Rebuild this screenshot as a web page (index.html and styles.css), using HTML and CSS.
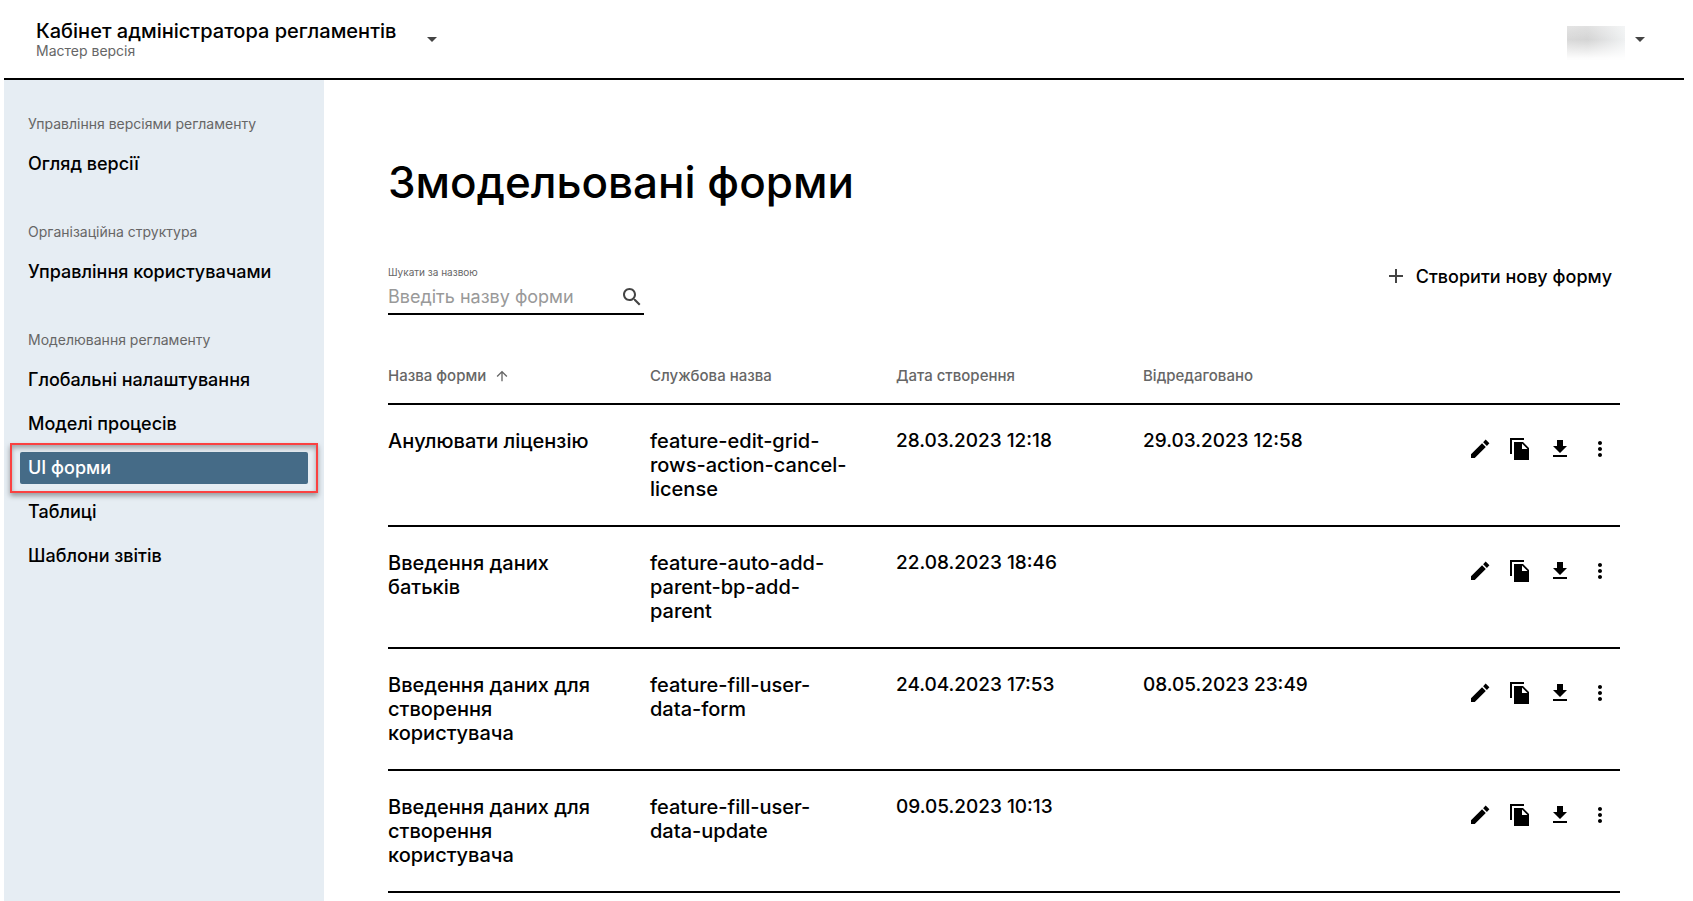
FILE: index.html
```html
<!DOCTYPE html>
<html lang="uk">
<head>
<meta charset="utf-8">
<title>Кабінет адміністратора регламентів</title>
<link rel="stylesheet" href="styles.css">
</head>
<body>
<svg class="sprite" aria-hidden="true">
  <symbol id="caret" viewBox="0 0 24 24"><path d="M7 10l5 5 5-5z"/></symbol>
  <symbol id="search" viewBox="0 0 24 24"><path d="M15.5 14h-.79l-.28-.27C15.41 12.59 16 11.11 16 9.5 16 5.91 13.09 3 9.5 3S3 5.91 3 9.5 5.91 16 9.5 16c1.61 0 3.09-.59 4.23-1.57l.27.28v.79l5 4.99L20.49 19l-4.99-5zm-6 0C7.01 14 5 11.99 5 9.5S7.01 5 9.5 5 14 7.01 14 9.5 11.99 14 9.5 14z"/></symbol>
  <symbol id="plus" viewBox="0 0 24 24"><path d="M19 13h-6v6h-2v-6H5v-2h6V5h2v6h6v2z"/></symbol>
  <symbol id="up" viewBox="0 0 24 24"><path d="M4 12l1.41 1.41L11 7.83V20h2V7.83l5.58 5.59L20 12l-8-8-8 8z"/></symbol>
  <symbol id="edit" viewBox="0 0 24 24"><path d="M3 17.25V21h3.75L17.81 9.94l-3.75-3.75L3 17.25zM21.41 6.34l-3.75-3.75-2.53 2.54 3.75 3.75 2.53-2.54z"/></symbol>
  <symbol id="copy" viewBox="0 0 24 24"><path d="M16 1H2v16h2V3h12V1zm-1 4l6 6v12H6V5h9zm-1 7h5.500L14 6.500V12z"/></symbol>
  <symbol id="download" viewBox="0 0 24 24"><path d="M19 9h-4V3H9v6H5l7 7 7-7zM5 18v2h14v-2H5z"/></symbol>
  <symbol id="more" viewBox="0 0 24 24"><path d="M12 8c1.100 0 2-.9 2-2s-.9-2-2-2-2 .9-2 2 .9 2 2 2zm0 2c-1.100 0-2 .9-2 2s.9 2 2 2 2-.9 2-2-.9-2-2-2zm0 6c-1.100 0-2 .9-2 2s.9 2 2 2 2-.9 2-2-.9-2-2-2z"/></symbol>
</svg>
<div class="app">
  <header class="header">
    <div class="brand">
      <div>
        <div class="brand-title">Кабінет адміністратора регламентів</div>
        <div class="brand-version">Мастер версія</div>
      </div>
      <button class="caret-button" type="button" aria-label="Змінити версію"><svg class="icon"><use href="#caret"/></svg></button>
    </div>
    <div class="user">
      <span class="user-name"></span>
      <button class="caret-button" type="button" aria-label="Меню користувача"><svg class="icon"><use href="#caret"/></svg></button>
    </div>
  </header>
  <div class="body">
    <nav class="sidebar">
      <section class="group">
        <h2 class="group-title">Управління версіями регламенту</h2>
        <a class="nav-link" href="#">Огляд версії</a>
      </section>
      <section class="group">
        <h2 class="group-title">Організаційна структура</h2>
        <a class="nav-link" href="#">Управління користувачами</a>
      </section>
      <section class="group">
        <h2 class="group-title">Моделювання регламенту</h2>
        <a class="nav-link" href="#">Глобальні налаштування</a>
        <a class="nav-link" href="#">Моделі процесів</a>
        <a class="nav-link active" href="#" aria-current="page">UI форми</a>
        <a class="nav-link" href="#">Таблиці</a>
        <a class="nav-link" href="#">Шаблони звітів</a>
      </section>
    </nav>
    <main class="main">
      <h1 class="title">Змодельовані форми</h1>
      <div class="toolbar">
        <div class="search">
          <label class="search-label" for="q">Шукати за назвою</label>
          <div class="search-field">
            <input class="search-input" id="q" type="text" placeholder="Введіть назву форми">
            <svg class="icon"><use href="#search"/></svg>
          </div>
        </div>
        <button class="create" type="button"><svg class="icon"><use href="#plus"/></svg>Створити нову форму</button>
      </div>
      <table class="forms">
        <colgroup><col class="col-name"><col class="col-key"><col class="col-date"><col class="col-date"><col></colgroup>
        <thead>
          <tr>
            <th scope="col"><button class="sort" type="button">Назва форми<svg class="sort-icon"><use href="#up"/></svg></button></th>
            <th scope="col">Службова назва</th>
            <th scope="col">Дата створення</th>
            <th scope="col">Відредаговано</th>
            <th></th>
          </tr>
        </thead>
        <tbody>
          <tr>
            <td>Анулювати ліцензію</td>
            <td>feature-edit-grid-rows-action-cancel-license</td>
            <td class="date">28.03.2023 12:18</td>
            <td class="date">29.03.2023 12:58</td>
            <td><div class="actions"><button class="action" type="button" aria-label="Редагувати"><svg class="icon"><use href="#edit"/></svg></button><button class="action" type="button" aria-label="Копіювати"><svg class="icon"><use href="#copy"/></svg></button><button class="action" type="button" aria-label="Завантажити"><svg class="icon"><use href="#download"/></svg></button><button class="action" type="button" aria-label="Більше"><svg class="icon"><use href="#more"/></svg></button></div></td>
          </tr>
          <tr>
            <td>Введення даних батьків</td>
            <td>feature-auto-add-parent-bp-add-parent</td>
            <td class="date">22.08.2023 18:46</td>
            <td class="date"></td>
            <td><div class="actions"><button class="action" type="button" aria-label="Редагувати"><svg class="icon"><use href="#edit"/></svg></button><button class="action" type="button" aria-label="Копіювати"><svg class="icon"><use href="#copy"/></svg></button><button class="action" type="button" aria-label="Завантажити"><svg class="icon"><use href="#download"/></svg></button><button class="action" type="button" aria-label="Більше"><svg class="icon"><use href="#more"/></svg></button></div></td>
          </tr>
          <tr>
            <td>Введення даних для створення користувача</td>
            <td>feature-fill-user-data-form</td>
            <td class="date">24.04.2023 17:53</td>
            <td class="date">08.05.2023 23:49</td>
            <td><div class="actions"><button class="action" type="button" aria-label="Редагувати"><svg class="icon"><use href="#edit"/></svg></button><button class="action" type="button" aria-label="Копіювати"><svg class="icon"><use href="#copy"/></svg></button><button class="action" type="button" aria-label="Завантажити"><svg class="icon"><use href="#download"/></svg></button><button class="action" type="button" aria-label="Більше"><svg class="icon"><use href="#more"/></svg></button></div></td>
          </tr>
          <tr>
            <td>Введення даних для створення користувача</td>
            <td>feature-fill-user-data-update</td>
            <td class="date">09.05.2023 10:13</td>
            <td class="date"></td>
            <td><div class="actions"><button class="action" type="button" aria-label="Редагувати"><svg class="icon"><use href="#edit"/></svg></button><button class="action" type="button" aria-label="Копіювати"><svg class="icon"><use href="#copy"/></svg></button><button class="action" type="button" aria-label="Завантажити"><svg class="icon"><use href="#download"/></svg></button><button class="action" type="button" aria-label="Більше"><svg class="icon"><use href="#more"/></svg></button></div></td>
          </tr>
        </tbody>
      </table>
    </main>
  </div>
</div>
</body>
</html>
```
FILE: styles.css
```css
* { box-sizing: border-box; }
body {
  margin: 0;
  background: #fff;
  color: #000;
  font-family: Inter, "Liberation Sans", sans-serif;
  font-weight: 500;
}
button {
  margin: 0;
  padding: 0;
  border: 0;
  background: none;
  color: inherit;
  font: inherit;
  cursor: pointer;
}
.sprite { display: none; }
.icon { display: block; width: 24px; height: 24px; flex: none; fill: currentColor; }

.app {
  display: flex;
  flex-direction: column;
  min-height: 100vh;
  padding: 0 9px 0 4px;
}
.header {
  display: flex;
  justify-content: space-between;
  align-items: center;
  height: 80px;
  padding: 0 32px;
  border-bottom: 2px solid #000;
}
.brand { display: flex; align-items: center; gap: 24px; white-space: nowrap; }
.brand-title { font-size: 20px; line-height: 24px; }
.brand-version { font-size: 14px; line-height: 16px; font-weight: 400; color: #666; }
.caret-button { color: #444; }
.user { display: flex; align-items: center; gap: 3px; }
.user-name {
  width: 58px;
  height: 34px;
  margin-top: 8px;
  background:
    linear-gradient(180deg, rgba(255,255,255,.3), rgba(255,255,255,0) 40%, rgba(255,255,255,.95) 95%),
    linear-gradient(90deg, #d8d8d8, #d4d4d4 35%, #eff1f2);
}

.body { display: flex; flex: 1; }
.sidebar {
  display: flex;
  flex-direction: column;
  gap: 44px;
  width: 320px;
  flex: none;
  padding: 36px 16px;
  background: #e6edf3;
}
.group { display: flex; flex-direction: column; gap: 12px; }
.group-title {
  margin: 0 0 4px;
  padding: 0 8px;
  font-size: 14px;
  line-height: 16px;
  font-weight: 400;
  color: #666;
}
.nav-link {
  padding: 0 8px;
  border-radius: 2px;
  font-size: 18px;
  line-height: 32px;
  color: #000;
  text-decoration: none;
  white-space: nowrap;
}
.nav-link.active { position: relative; background: #456b87; color: #fff; }
.nav-link.active::after {
  content: "";
  position: absolute;
  inset: -9px -10px;
  border: 2px solid #fa4141;
  box-shadow: 0 3px 5px rgba(0,0,0,.35), inset 0 3px 5px rgba(0,0,0,.3);
}

.main { flex: 1; min-width: 0; padding: 78px 64px 0; }
.title { margin: 0; font-size: 44px; line-height: 48px; font-weight: 500; }
.toolbar {
  display: flex;
  justify-content: space-between;
  align-items: flex-start;
  margin-top: 58px;
}
.search { width: 256px; }
.search-label { display: block; font-size: 10px; line-height: 16px; font-weight: 400; color: #666; }
.search-field {
  display: flex;
  align-items: center;
  height: 35px;
  border-bottom: 2px solid #000;
  color: #444;
}
.search-input {
  flex: 1;
  min-width: 0;
  padding: 0;
  border: 0;
  outline: 0;
  background: none;
  color: #000;
  font: inherit;
  font-size: 18px;
  font-weight: 400;
}
.search-input::placeholder { color: #999; opacity: 1; }
.create {
  display: flex;
  align-items: center;
  gap: 8px;
  height: 24px;
  padding-right: 8px;
  font-size: 18px;
}
.create .icon { fill: #444; }

.forms {
  width: 100%;
  margin-top: 47px;
  border-collapse: separate;
  border-spacing: 0;
  table-layout: fixed;
}
.col-name { width: 262px; }
.col-key { width: 246px; }
.col-date { width: 247px; }
.forms th {
  height: 43px;
  padding: 0 0 13px;
  border-bottom: 2px solid #000;
  font-size: 15px;
  line-height: 16px;
  font-weight: 500;
  text-align: left;
  color: #666;
}
.sort { display: flex; align-items: center; gap: 8px; }
.sort-icon { width: 16px; height: 16px; fill: currentColor; }
.forms td {
  padding: 24px 40px 24px 0;
  border-bottom: 2px solid #000;
  height: 122px;
  font-size: 20px;
  line-height: 24px;
  vertical-align: top;
}
.forms .date { font-size: 19px; }
.forms td:last-child { padding-right: 0; }
.actions { display: flex; justify-content: flex-end; }
.action { display: grid; place-items: center; width: 40px; height: 40px; }
```
